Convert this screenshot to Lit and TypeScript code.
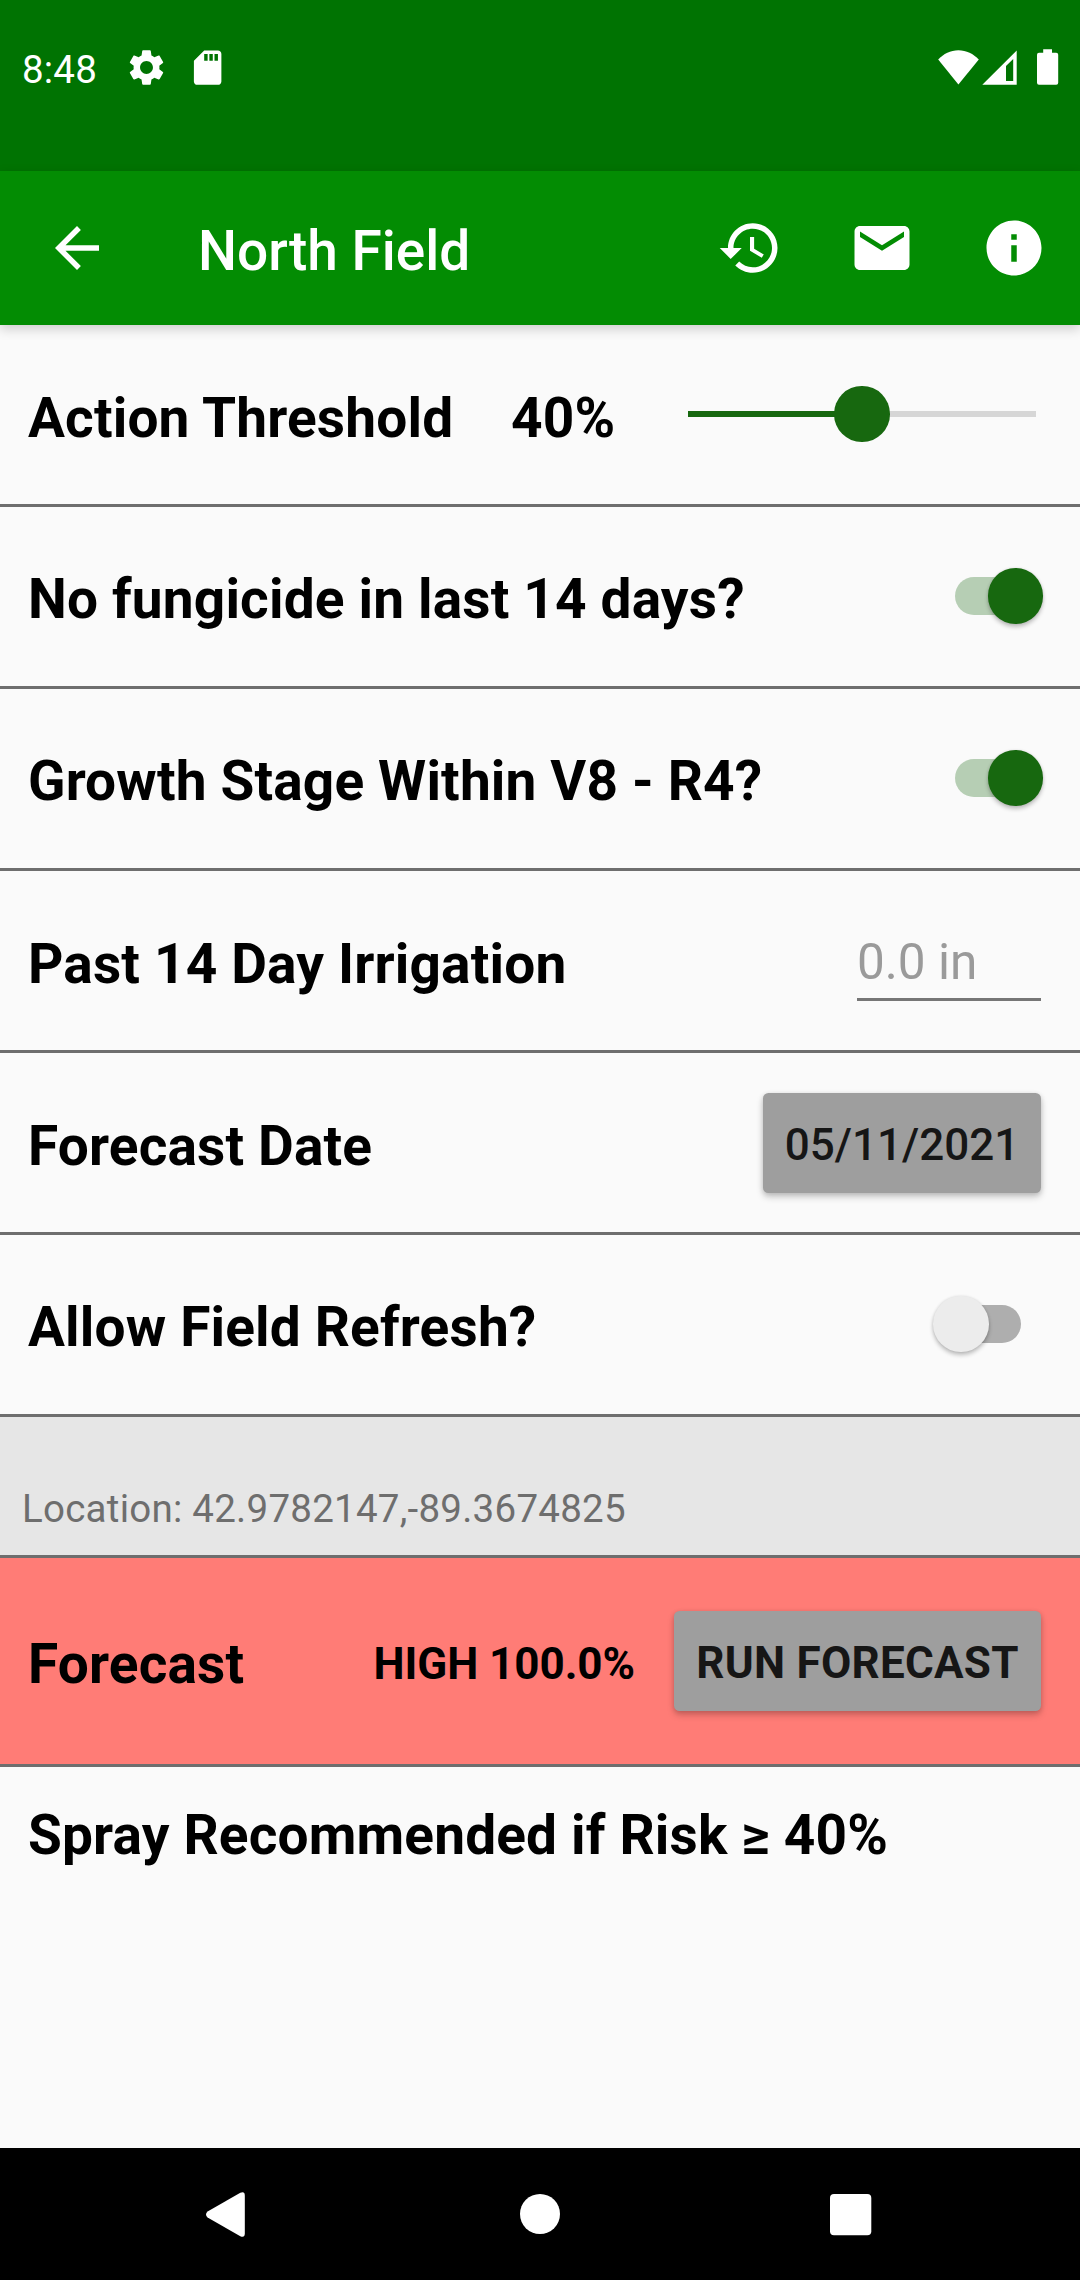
import { LitElement, html, css, svg } from "lit";
import { customElement, property } from "lit/decorators.js";

const ICONS = {
  settings: svg`<path d="M19.14 12.94c.04-.3.06-.61.06-.94 0-.32-.02-.64-.07-.94l2.03-1.58c.18-.14.23-.41.12-.61l-1.92-3.32c-.12-.22-.37-.29-.59-.22l-2.39.96c-.5-.38-1.03-.7-1.62-.94l-.36-2.54c-.04-.24-.24-.41-.48-.41h-3.84c-.24 0-.43.17-.47.41l-.36 2.54c-.59.24-1.13.57-1.62.94l-2.39-.96c-.22-.08-.47 0-.59.22L2.74 8.87c-.12.21-.08.47.12.61l2.03 1.58c-.05.3-.09.63-.09.94s.02.64.07.94l-2.03 1.58c-.18.14-.23.41-.12.61l1.92 3.32c.12.22.37.29.59.22l2.39-.96c.5.38 1.03.7 1.62.94l.36 2.54c.05.24.24.41.48.41h3.84c.24 0 .44-.17.47-.41l.36-2.54c.59-.24 1.13-.56 1.62-.94l2.39.96c.22.08.47 0 .59-.22l1.92-3.32c.12-.22.07-.47-.12-.61l-2.01-1.58zM12 15.6c-1.98 0-3.6-1.62-3.6-3.6s1.62-3.6 3.6-3.6 3.6 1.62 3.6 3.6-1.62 3.6-3.6 3.6z"/>`,
  sd: svg`<path d="M18 2h-8L4.02 8 4 20c0 1.1.9 2 2 2h12c1.1 0 2-.9 2-2V4c0-1.1-.9-2-2-2zm-6 6h-2V4h2v4zm3 0h-2V4h2v4zm3 0h-2V4h2v4z"/>`,
  back: svg`<path d="M20 11H7.83l5.59-5.59L12 4l-8 8 8 8 1.41-1.41L7.83 13H20v-2z"/>`,
  history: svg`<path d="M13 3c-4.97 0-9 4.03-9 9H1l3.89 3.89.07.14L9 12H6c0-3.87 3.13-7 7-7s7 3.13 7 7-3.13 7-7 7c-1.93 0-3.68-.79-4.94-2.06l-1.42 1.42C8.27 19.99 10.51 21 13 21c4.97 0 9-4.03 9-9s-4.03-9-9-9zm-1 5v5l4.28 2.54.72-1.21-3.5-2.08V8H12z"/>`,
  mail: svg`<path d="M20 4H4c-1.1 0-1.99.9-1.99 2L2 18c0 1.1.9 2 2 2h16c1.1 0 2-.9 2-2V6c0-1.1-.9-2-2-2zm0 4l-8 5-8-5V6l8 5 8-5v2z"/>`,
  info: svg`<path d="M12 2C6.48 2 2 6.48 2 12s4.48 10 10 10 10-4.48 10-10S17.52 2 12 2zm1 15h-2v-6h2v6zm0-8h-2V7h2v2z"/>`,
};

const icon = (name: keyof typeof ICONS, cls: string) =>
  html`<svg class=${cls} viewBox="0 0 24 24" fill="currentColor">${ICONS[name]}</svg>`;

@customElement("toggle-switch")
export class ToggleSwitch extends LitElement {
  @property({ type: Boolean, reflect: true }) on = false;

  static styles = css`
    :host {
      display: grid;
      grid-template: 56px / 110px;
      align-items: center;
      flex: none;
      margin-bottom: 1px;
    }
    .track,
    .thumb {
      grid-area: 1 / 1;
    }
    .track {
      justify-self: center;
      width: 66px;
      height: 38px;
      border-radius: 19px;
      background: #aeaeae;
    }
    .thumb {
      width: 55.5px;
      height: 55.5px;
      border-radius: 50%;
      background: #ececec;
      box-shadow: 0 3px 4px rgba(0, 0, 0, 0.24), 0 0 3px rgba(0, 0, 0, 0.1);
    }
    :host([on]) .track {
      background: #b6ceb4;
    }
    :host([on]) .thumb {
      justify-self: end;
      background: #17680f;
    }
  `;

  render() {
    return html`<span class="track"></span><span class="thumb"></span>`;
  }
}

@customElement("threshold-slider")
export class ThresholdSlider extends LitElement {
  @property({ type: Number }) value = 50;

  static styles = css`
    :host {
      display: flex;
      align-items: center;
      flex: none;
      width: 348px;
      height: 56px;
      margin-bottom: 1px;
    }
    .fill {
      height: 6px;
      background: #17680f;
    }
    .rest {
      flex: 1;
      height: 6px;
      background: #d6d6d6;
    }
    .thumb {
      flex: none;
      width: 55.5px;
      height: 55.5px;
      margin: 0 -27.75px;
      border-radius: 50%;
      background: #17680f;
      z-index: 1;
    }
  `;

  render() {
    return html`<span class="fill" style="width:${this.value}%"></span
      ><span class="thumb"></span><span class="rest"></span>`;
  }
}

@customElement("app-root")
export class AppRoot extends LitElement {
  static styles = css`
    :host {
      display: flex;
      flex-direction: column;
      width: 1080px;
      height: 2280px;
      background: #fafafa;
      color: #000;
      font-family: Roboto, "Liberation Sans", sans-serif;
      overflow: hidden;
    }
    * {
      box-sizing: border-box;
    }
    svg {
      display: block;
      flex: none;
    }
    .status {
      display: flex;
      align-items: flex-start;
      flex: none;
      height: 171px;
      padding: 46.6px 21.5px 0 22px;
      background: #007302;
      color: #fff;
    }
    .clock {
      width: 103px;
      font-size: 38.5px;
      letter-spacing: 0.2px;
      line-height: 46px;
    }
    .mini {
      width: 41.25px;
      height: 41.25px;
    }
    .gear {
      width: 43px;
      height: 43px;
      margin-top: -0.9px;
      margin-right: 18.6px;
    }
    .radio {
      width: 121px;
      height: 37px;
      margin: 2.4px 0 0 auto;
    }
    .bar {
      display: flex;
      align-items: center;
      flex: none;
      height: 154px;
      padding: 0 33px 0 44px;
      background: #038c03;
      color: #fff;
      box-shadow: 0 4px 11px rgba(0, 0, 0, 0.18);
      z-index: 1;
    }
    .action {
      width: 66px;
      height: 66px;
    }
    .title {
      flex: 1;
      margin: 0 0 0 88px;
      padding-top: 6px;
      font-size: 55px;
      font-weight: 500;
      line-height: 64px;
    }
    .actions {
      display: flex;
      gap: 66px;
    }
    .row {
      display: flex;
      align-items: center;
      flex: none;
      height: 182px;
      padding-left: 28px;
      padding-right: 37px;
      border-bottom: 3px solid #6e6e6e;
    }
    .label {
      flex: 1;
      padding-top: 5px;
      font-size: 55px;
      font-weight: 700;
      letter-spacing: 0.16px;
      line-height: 64px;
      white-space: nowrap;
    }
    .low {
      padding-top: 7px;
    }
    .percent {
      flex: none;
      width: 177px;
    }
    .slider-row {
      padding-right: 44px;
    }
    .edge {
      padding-right: 39px;
    }
    .field {
      width: 184px;
      height: 74px;
      margin-top: 7px;
      padding-top: 6px;
      border-bottom: 3px solid #767676;
      color: #9a9a9a;
      font-size: 49.5px;
      line-height: 58px;
    }
    .button {
      display: flex;
      align-items: center;
      justify-content: center;
      flex: none;
      height: 100px;
      padding-top: 3px;
      border-radius: 5.5px;
      background: #9e9e9e;
      color: #161616;
      font-size: 44px;
      font-weight: 500;
      line-height: 52px;
      white-space: nowrap;
      box-shadow: 0 4px 7px rgba(0, 0, 0, 0.2), 0 1px 5px rgba(0, 0, 0, 0.12);
    }
    .date {
      width: 278px;
      margin-top: 1px;
    }
    .run {
      width: 367px;
      font-weight: 700;
      letter-spacing: 0.25px;
    }
    .location {
      flex: none;
      height: 141px;
      padding: 69px 22px 0;
      border-bottom: 3px solid #6e6e6e;
      background: #e6e6e6;
      color: #6e6e6e;
      font-size: 38.5px;
      letter-spacing: 0.25px;
      line-height: 46px;
    }
    .forecast {
      height: 209px;
      background: #ff7c76;
    }
    .risk {
      margin-right: 39px;
      padding-top: 5px;
      font-size: 44px;
      font-weight: 700;
      letter-spacing: -0.06px;
      line-height: 52px;
    }
    .advice {
      flex: 1;
      padding: 36px 28px 0;
      font-size: 55px;
      font-weight: 700;
      letter-spacing: 0.16px;
      line-height: 64px;
    }
    .nav {
      flex: none;
      height: 132px;
      background: #000;
    }
  `;

  render() {
    return html`
      <div class="status">
        <span class="clock">8:48</span>
        ${icon("settings", "gear")} ${icon("sd", "mini")}
        <svg class="radio" viewBox="938 49 121 37" fill="#fff">
          <path d="M958.4 84.4 938.2 59.4C943.5 54 950.5 50.3 958.4 50.3S973.4 54 978.8 59.4Z" />
          <path fill-rule="evenodd" d="M982.3 84.7 1016.7 50.5V84.7ZM1006 66V81H1013.2V59Z" />
          <path d="M1039 52.8H1043.2V49.2H1052V52.8H1056.2Q1058.2 52.8 1058.2 54.8V82.7Q1058.2 84.7 1056.2 84.7H1039Q1037 84.7 1037 82.7V54.8Q1037 52.8 1039 52.8Z" />
        </svg>
      </div>

      <header class="bar">
        ${icon("back", "action")}
        <h1 class="title">North Field</h1>
        <div class="actions">
          ${icon("history", "action")} ${icon("mail", "action")} ${icon("info", "action")}
        </div>
      </header>

      <div class="row slider-row">
        <span class="label low">Action Threshold</span>
        <span class="label low percent">40%</span>
        <threshold-slider .value=${50}></threshold-slider>
      </div>
      <div class="row">
        <span class="label">No fungicide in last 14 days?</span>
        <toggle-switch on></toggle-switch>
      </div>
      <div class="row">
        <span class="label">Growth Stage Within V8 - R4?</span>
        <toggle-switch on></toggle-switch>
      </div>
      <div class="row edge">
        <span class="label low">Past 14 Day Irrigation</span>
        <span class="field">0.0 in</span>
      </div>
      <div class="row edge">
        <span class="label low">Forecast Date</span>
        <span class="button date">05/11/2021</span>
      </div>
      <div class="row">
        <span class="label">Allow Field Refresh?</span>
        <toggle-switch></toggle-switch>
      </div>
      <div class="location">Location: 42.9782147,-89.3674825</div>
      <div class="row forecast edge">
        <span class="label">Forecast</span>
        <span class="risk">HIGH 100.0%</span>
        <span class="button run">RUN FORECAST</span>
      </div>
      <div class="advice">Spray Recommended if Risk ≥ 40%</div>

      <svg class="nav" viewBox="0 2148 1080 132" fill="#fff">
        <path d="M240.3 2192.8 207.6 2211.4Q204.4 2214.4 207.6 2217.4L240.3 2236.2Q244.8 2238 244.8 2233.5V2195.5Q244.8 2191 240.3 2192.8Z" />
        <circle cx="540" cy="2214" r="20" />
        <rect x="830" y="2194" width="41.3" height="41.3" rx="4" />
      </svg>
    `;
  }
}
